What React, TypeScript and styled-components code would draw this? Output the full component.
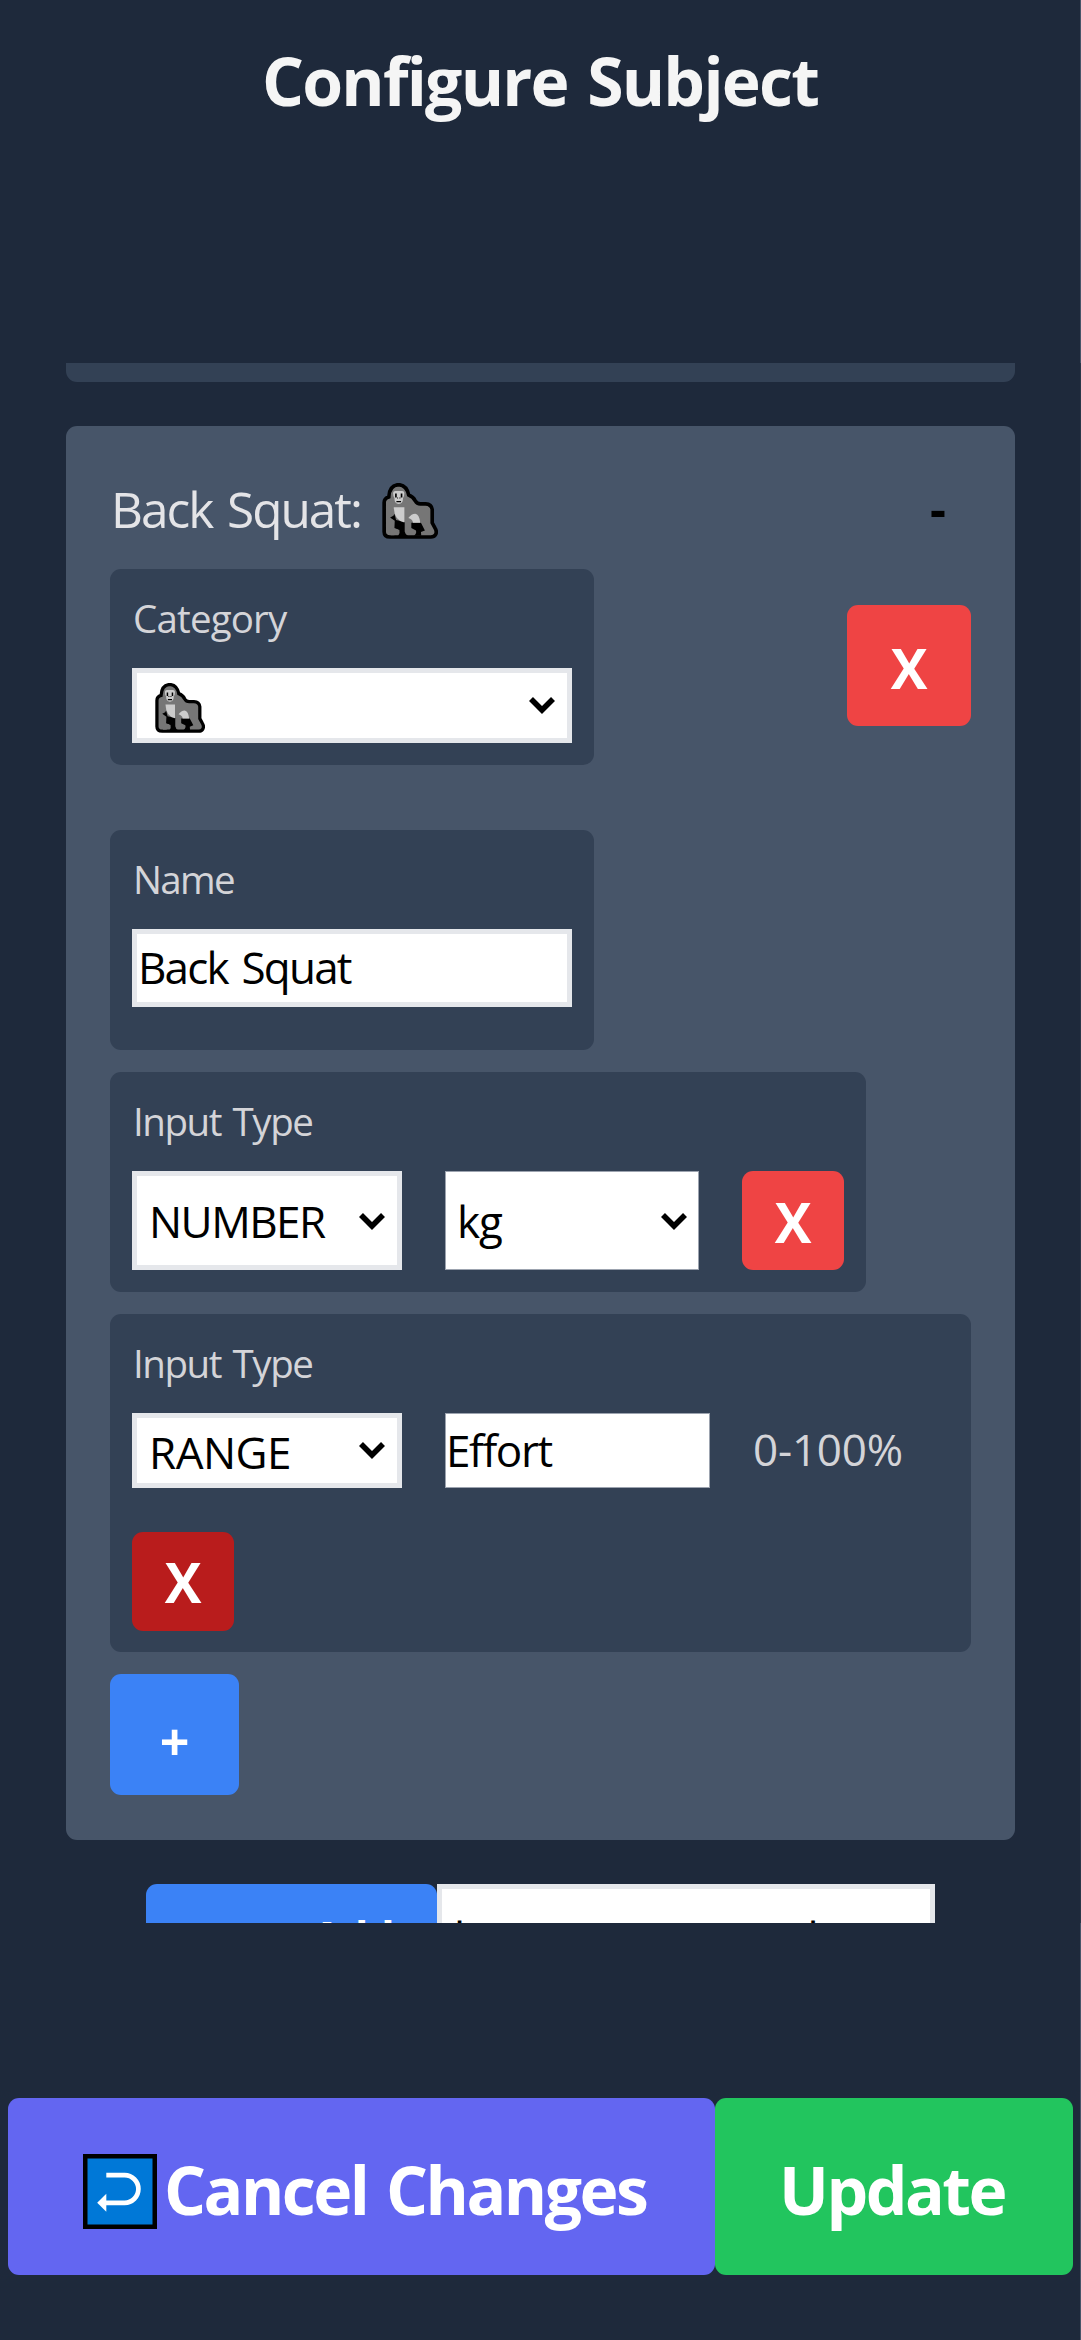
import React from 'react';
import styled, { createGlobalStyle } from 'styled-components';

const GlobalStyle = createGlobalStyle`
  *, *::before, *::after { box-sizing: border-box; }
  html, body { margin: 0; background: #1e293b; }
  body { font-family: 'Open Sans', 'Noto Sans', sans-serif; overflow: hidden; }
  button, input { font-family: inherit; margin: 0; }
`;

const Page = styled.div`
  display: flex;
  flex-direction: column;
  height: 2340px;
  background: #1e293b;
`;

const Header = styled.header`
  flex: none;
  height: 363px;
  padding-top: 36px;
  border-right: 1px solid #475569;
`;

const Title = styled.h1`
  margin: 0;
  text-align: center;
  font-size: 66px;
  line-height: 88px;
  font-weight: 700;
  letter-spacing: -1.75px;
  word-spacing: 4px;
  color: #f5f5f5;
`;

const ScrollArea = styled.main`
  flex: none;
  height: 1560px;
  overflow: hidden;
  display: flex;
  flex-direction: column;
  gap: 44px;
  padding: 0 65px 0 66px;
  border-right: 1px solid #2a3749;
`;

const PreviousCard = styled.section`
  flex: none;
  height: 19px;
  border-radius: 0 0 11px 11px;
  background: #334155;
`;

const Card = styled.section`
  flex: none;
  display: flex;
  flex-direction: column;
  align-items: flex-start;
  gap: 22px;
  height: 1413.5px;
  padding: 44px;
  border-radius: 11px;
  background: #475569;
`;

const CardHeader = styled.div`
  display: flex;
  justify-content: space-between;
  align-self: stretch;
  height: 99px;
  margin-bottom: -22px;
  font-size: 49.5px;
  line-height: 78px;
`;

const CardTitle = styled.div`
  display: flex;
  align-items: center;
  height: 82px;
  color: #e4e4e7;
`;

const CardName = styled.span`
  height: 82px;
  width: 271.5px;
  padding-left: 1px;
  letter-spacing: -2px;
  word-spacing: 4px;
`;

const CollapseButton = styled.button`
  height: 77px;
  padding: 0 25px;
  border: 0;
  background: transparent;
  color: #000;
  font-size: 49.5px;
  line-height: 77px;
  font-weight: 700;
`;

const CategoryRow = styled.div`
  display: flex;
  justify-content: space-between;
  align-items: flex-start;
  align-self: stretch;
  margin-bottom: 43px;
`;

const Panel = styled.div<{ $w: number; $h: number }>`
  display: flex;
  flex-direction: column;
  flex: none;
  gap: 22px;
  width: ${(p) => p.$w}px;
  height: ${(p) => p.$h}px;
  padding: 22px;
  border-radius: 11px;
  background: #334155;
`;

const Label = styled.label<{ $ls: number }>`
  padding-left: 1px;
  font-size: 38.5px;
  line-height: 55px;
  letter-spacing: ${(p) => p.$ls}px;
  word-spacing: 3px;
  color: #d4d4d8;
`;

const Fields = styled.div`
  display: flex;
  flex-wrap: wrap;
  gap: 44px 43px;
`;

const SelectBox = styled.div<{ $w: number; $h: number; $bordered?: boolean; $pad: number; $ls?: number; $drop?: number }>`
  display: flex;
  align-items: center;
  justify-content: space-between;
  width: ${(p) => p.$w}px;
  height: ${(p) => p.$h}px;
  padding: ${(p) => p.$drop ?? 0}px ${(p) => (p.$bordered ? 12 : 11)}px 0 ${(p) => p.$pad}px;
  border: ${(p) => (p.$bordered ? '5px solid #e5e7eb' : '1px solid #9ca3af')};
  background: #fff;
  color: #000;
  font-size: 44px;
  line-height: 60px;
  letter-spacing: ${(p) => p.$ls ?? 0}px;
`;

const TextInput = styled.input<{ $w: number; $h: number; $bordered?: boolean; $ls: number }>`
  width: ${(p) => p.$w}px;
  height: ${(p) => p.$h}px;
  padding: 0 0 2px ${(p) => (p.$bordered ? 1 : 0)}px;
  border: ${(p) => (p.$bordered ? '5px solid #e5e7eb' : '1px solid #9ca3af')};
  border-radius: 0;
  outline: 0;
  background: #fff;
  color: #000;
  font-size: 44px;
  letter-spacing: ${(p) => p.$ls}px;
  word-spacing: 4px;
`;

const RangeHint = styled.span`
  height: 75px;
  font-size: 44px;
  line-height: 72px;
  letter-spacing: -0.2px;
  color: #d4d4d8;
`;

const ActionButton = styled.button<{ $w: number; $h: number; $bg: string; $drop?: number; $size?: number }>`
  flex: none;
  display: flex;
  align-items: center;
  justify-content: center;
  width: ${(p) => p.$w}px;
  height: ${(p) => p.$h}px;
  padding: ${(p) => p.$drop ?? 0}px 0 0;
  border: 0;
  border-radius: 11px;
  background: ${(p) => p.$bg};
  color: #fff;
  font-size: ${(p) => p.$size ?? 55}px;
  line-height: 75px;
  font-weight: 700;
`;

const CategoryRemove = styled(ActionButton)`
  margin-top: 36px;
`;

const AddRow = styled.div`
  flex: none;
  display: flex;
  height: 107px;
  padding-left: 80px;
`;

const AddButton = styled.button`
  width: 291px;
  padding: 0 44px;
  border: 0;
  border-radius: 11px;
  background: #3b82f6;
  color: #fff;
  font-size: 44px;
  line-height: 60px;
  font-weight: 700;
  letter-spacing: -1.6px;
  text-align: right;
`;

const AddField = styled.div`
  width: 498px;
  padding: 15px 0 0 12px;
  border: 5.5px solid #e5e7eb;
  background: #fff;
  color: #000;
  font-size: 44px;
  line-height: 66px;
  word-spacing: 331px;
  white-space: nowrap;
`;

const Footer = styled.footer`
  flex: 1;
  display: flex;
  align-items: flex-start;
  padding: 175px 7px 0 8px;
  border-right: 1px solid #475569;
`;

const FooterButton = styled.button<{ $w: number; $bg: string; $pad: number; $ls: number }>`
  flex: none;
  display: flex;
  align-items: center;
  gap: 7px;
  width: ${(p) => p.$w}px;
  height: 176.5px;
  padding: 6px 0 0 ${(p) => p.$pad}px;
  border: 0;
  border-radius: 11px;
  background: ${(p) => p.$bg};
  color: #fff;
  font-size: 66px;
  line-height: 90px;
  font-weight: 700;
  letter-spacing: ${(p) => p.$ls}px;
  word-spacing: 4px;
  white-space: nowrap;
`;

const ReturnBadge = styled.svg`
  flex: none;
  margin-top: 4px;
`;

const Gorilla = ({ size }: { size: number }) => (
  <svg width={size} height={size} viewBox="64 38 168 169" aria-label="gorilla">
    <path
      d="M70 185V97Q70 84 84 80Q86 44 114 43Q138 45 144 74Q158 79 164 92Q169 101 179 101H195Q213 102 215 118V158L224 175Q230 185 225 194Q221 201 211 201H88Q70 201 70 185Z"
      fill="#767676"
      stroke="#000"
      strokeWidth="11"
    />
    <path d="M88 142L98 137L101 131L106 150L132 156V184Q134 194 142 198H112Q119 190 116 180L101 174L102 152Z" fill="#000" />
    <path d="M101 177H110Q114 185 108 192Q104 196 98 196H90V175Z" fill="#767676" />
    <path d="M152 158H181L193 181L181 186L182 197H160Q169 190 166 181L152 174Z" fill="#000" />
    <path d="M99 111H131V157Q100 151 99 111Z" fill="#ccc" />
    <path d="M143 144Q152 131 164 131Q176 133 179 158H157Q156 148 143 144Z" fill="#ccc" />
    <path d="M97 68Q97 62 104 62H124Q131 62 131 68Q131 78 127 83Q127 101 114 101Q101 101 101 83Q97 78 97 68Z" fill="#ccc" />
    <path d="M103 70h5v12h-5zM120 70h5v12h-5zM109 82h3v3h-3zM116 82h3v3h-3zM107 92h14v4h-14z" fill="#000" />
  </svg>
);

const Chevron = () => (
  <svg width="26" height="17" viewBox="0 0 26 17" aria-hidden="true">
    <path d="M2 2L13 13L24 2" fill="none" stroke="#000" strokeWidth="5.6" />
  </svg>
);

const SelectChevron = styled.span<{ $lift: number }>`
  display: flex;
  flex: none;
  padding-bottom: ${(p) => p.$lift}px;
`;

export default function App() {
  return (
    <>
      <GlobalStyle />
      <Page>
        <Header>
          <Title>Configure Subject</Title>
        </Header>

        <ScrollArea>
          <PreviousCard />

          <Card>
            <CardHeader>
              <CardTitle>
                <CardName>Back Squat:</CardName>
                <Gorilla size={56} />
              </CardTitle>
              <CollapseButton>-</CollapseButton>
            </CardHeader>

            <CategoryRow>
              <Panel $w={484} $h={196}>
                <Label $ls={-0.83}>Category</Label>
                <SelectBox $w={440} $h={75} $bordered $pad={18} $drop={4}>
                  <Gorilla size={50} />
                  <SelectChevron $lift={5}><Chevron /></SelectChevron>
                </SelectBox>
              </Panel>
              <CategoryRemove $w={124} $h={121} $bg="#ef4444" $drop={3}>X</CategoryRemove>
            </CategoryRow>

            <Panel $w={484} $h={220}>
              <Label $ls={-1.67}>Name</Label>
              <TextInput $w={440} $h={78} $bordered $ls={-1.8} defaultValue="Back Squat" />
            </Panel>

            <Panel $w={756} $h={220}>
              <Label $ls={-1.45}>Input Type</Label>
              <Fields>
                <SelectBox $w={270} $h={99} $bordered $pad={12} $ls={-1.53} $drop={1}>
                  NUMBER
                  <SelectChevron $lift={0}><Chevron /></SelectChevron>
                </SelectBox>
                <SelectBox $w={254} $h={99} $pad={11} $ls={-1} $drop={1}>
                  kg
                  <SelectChevron $lift={0}><Chevron /></SelectChevron>
                </SelectBox>
                <ActionButton $w={102} $h={99} $bg="#ef4444" $drop={1}>X</ActionButton>
              </Fields>
            </Panel>

            <Panel $w={861} $h={338}>
              <Label $ls={-1.45}>Input Type</Label>
              <Fields>
                <SelectBox $w={270} $h={75} $bordered $pad={12} $ls={-0.52} $drop={3}>
                  RANGE
                  <SelectChevron $lift={4}><Chevron /></SelectChevron>
                </SelectBox>
                <TextInput $w={265} $h={75} $ls={-1.4} defaultValue="Effort" />
                <RangeHint>0-100%</RangeHint>
                <ActionButton $w={102} $h={99} $bg="#b91c1c">X</ActionButton>
              </Fields>
            </Panel>

            <ActionButton $w={129} $h={121} $bg="#3b82f6" $size={52} $drop={11}>+</ActionButton>
          </Card>

          <AddRow>
            <AddButton>Add</AddButton>
            <AddField>l l</AddField>
          </AddRow>
        </ScrollArea>

        <Footer>
          <FooterButton $w={707} $bg="#6366f1" $pad={75} $ls={-2.5}>
            <ReturnBadge width="74" height="75" viewBox="0 0 74 75">
              <rect x="2.25" y="2.25" width="69.5" height="70.5" fill="#0078d7" stroke="#000" strokeWidth="4.5" />
              <path d="M23.3 21.2H41.6A13.8 13.8 0 0 1 41.6 48.8H22" fill="none" stroke="#fff" strokeWidth="4.7" />
              <path d="M14.2 48.8L23.3 39.8V57.8Z" fill="#fff" />
            </ReturnBadge>
            Cancel Changes
          </FooterButton>
          <FooterButton $w={358} $bg="#22c55e" $pad={64} $ls={-2.49}>
            Update
          </FooterButton>
        </Footer>
      </Page>
    </>
  );
}
